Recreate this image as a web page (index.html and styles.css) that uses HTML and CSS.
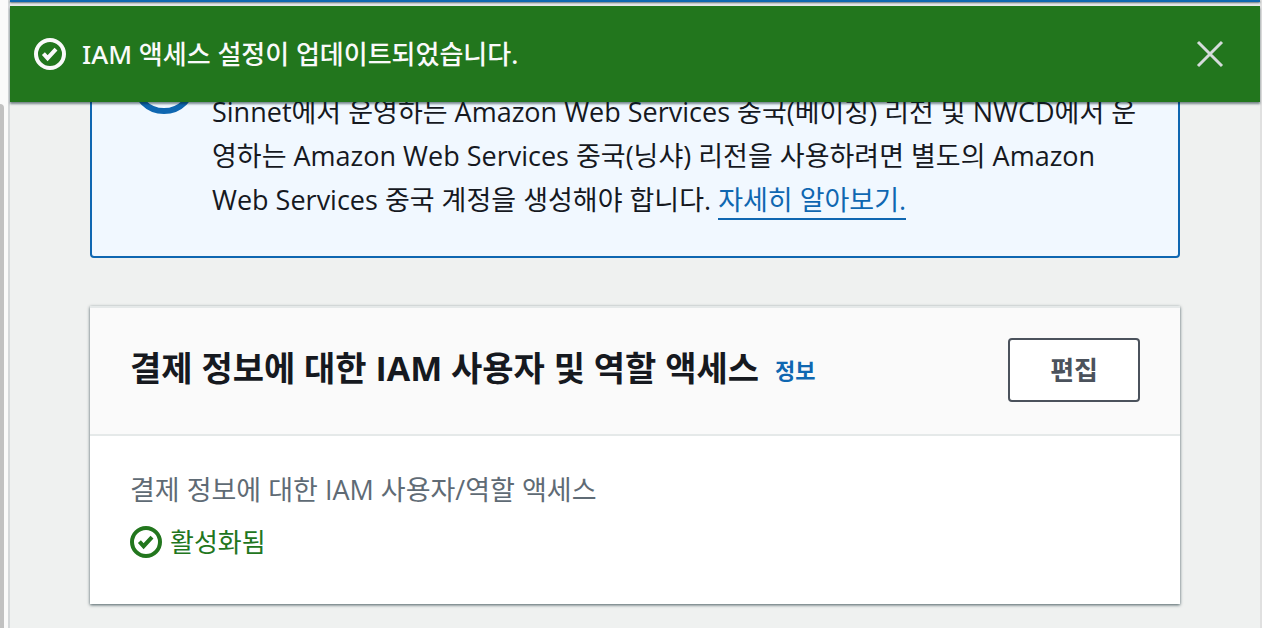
FILE: index.html
```
<!DOCTYPE html>
<html lang="ko">
<head>
    <meta charset="UTF-8">
    <meta name="viewport" content="width=device-width, initial-scale=1.0">
    <title>IAM 액세스 설정</title>
    <link rel="stylesheet" href="styles.css">
</head>
<body>
    <div class="layout">
        <div class="gutter">
            <div class="gutter-thumb"></div>
        </div>

        <div class="page">
            <!-- Notifications stay above the scrolled content -->
            <div class="flashbar">
                <div class="flash flash-info"></div>
                <div class="flash flash-success" role="status">
                    <svg class="icon" viewBox="0 0 16 16" aria-hidden="true">
                        <circle cx="8" cy="8" r="7"></circle>
                        <path d="M4.7 7.8l2.1 2.3 4.2-4.5"></path>
                    </svg>
                    <span class="flash-text">IAM 액세스 설정이 업데이트되었습니다.</span>
                    <button type="button" class="flash-close" aria-label="닫기">
                        <svg class="icon-close" viewBox="0 0 28 28" aria-hidden="true">
                            <path d="M2 2l24 24M26 2L2 26"></path>
                        </svg>
                    </button>
                </div>
            </div>

            <main class="content">
                <div class="alert">
                    <svg class="icon icon-large" viewBox="0 0 64 64" aria-hidden="true">
                        <circle cx="32" cy="32" r="29"></circle>
                    </svg>
                    <p class="alert-text">Sinnet에서 운영하는 Amazon Web Services 중국(베이징) 리전 및 NWCD에서 운영하는 Amazon Web Services 중국(닝샤) 리전을 사용하려면 별도의 Amazon Web Services 중국 계정을 생성해야 합니다. <a href="#">자세히 알아보기.</a></p>
                </div>

                <section class="panel">
                    <div class="panel-header">
                        <h2>결제 정보에 대한 IAM 사용자 및 역할 액세스</h2>
                        <a href="#" class="info-link">정보</a>
                        <button type="button" class="btn">편집</button>
                    </div>
                    <div class="panel-body">
                        <div class="label">결제 정보에 대한 IAM 사용자/역할 액세스</div>
                        <div class="status">
                            <svg class="icon" viewBox="0 0 16 16" aria-hidden="true">
                                <circle cx="8" cy="8" r="7"></circle>
                                <path d="M4.7 7.8l2.1 2.3 4.2-4.5"></path>
                            </svg>
                            <span>활성화됨</span>
                        </div>
                    </div>
                </section>
            </main>
        </div>
    </div>
</body>
</html>
```
FILE: styles.css
```
:root {
    --blue: #0f67b1;
    --green: #22761d;
    --background: #eff1f0;
    --text: #16191f;
    --muted: #5f6b75;
    --button: #4b525c;
    --border: #e5e9e9;
}

* {
    box-sizing: border-box;
}

body {
    margin: 0;
    overflow: hidden;
    background: var(--background);
    color: var(--text);
    font-family: "Open Sans", "Noto Sans CJK KR", sans-serif;
    font-size: 26px;
    line-height: 44px;
}

a {
    color: var(--blue);
    text-decoration: none;
}

.layout {
    display: flex;
    min-height: 100vh;
}

.gutter {
    flex: 0 0 10px;
    padding-top: 104px;
    background: #fafafa;
    border-right: 2px solid #d5d8da;
}

.gutter-thumb {
    width: 4px;
    height: 100%;
    background: #c1c1c1;
    border-top-right-radius: 4px;
}

.page {
    flex: 1;
    position: relative;
    border-right: 2px solid #e0e0e0;
}

.flashbar {
    position: absolute;
    top: 0;
    left: 0;
    right: 0;
    background: #e8eaea;
}

.flash-info {
    height: 2px;
    margin-bottom: 4px;
    background: var(--blue);
    box-shadow: 0 1px 2px rgba(0, 28, 36, 0.6);
}

.flash-success {
    display: flex;
    align-items: center;
    gap: 16px;
    height: 96px;
    padding: 0 36px 0 24px;
    background: var(--green);
    color: #fafafa;
    box-shadow: 0 2px 2px rgba(0, 28, 36, 0.5);
}

.flash-text {
    flex: 1;
    font-family: "Noto Sans", "Noto Sans CJK KR", sans-serif;
    font-weight: 500;
}

.flash-close {
    display: flex;
    padding: 0;
    background: none;
    border: none;
    color: #d5dbdb;
    cursor: pointer;
}

.icon {
    flex: none;
    width: 32px;
    height: 32px;
    fill: none;
    stroke: currentColor;
    stroke-width: 2;
}

.icon-large {
    width: 64px;
    height: 64px;
    color: var(--blue);
    stroke-width: 6;
}

.icon-close {
    width: 28px;
    height: 28px;
    fill: none;
    stroke: currentColor;
    stroke-width: 3;
}

.content {
    padding: 8px 80px 24px;
}

.alert {
    display: flex;
    gap: 16px;
    margin-bottom: 48px;
    padding: 40px 40px 34px;
    background: #f1f8ff;
    border: 2px solid var(--blue);
    border-radius: 4px;
}

.alert-text {
    margin: 0;
    padding-top: 40px;
    font-size: 27px;
}

.alert-text a {
    border-bottom: 2px solid var(--blue);
}

.panel {
    background: #fff;
    border-top: 2px solid var(--border);
    box-shadow: 0 1px 3px rgba(0, 28, 36, 0.7);
}

.panel-header {
    display: flex;
    align-items: flex-start;
    gap: 16px;
    padding: 30px 40px 32px;
    background: #fafafa;
    border-bottom: 2px solid var(--border);
}

h2 {
    margin: 0;
    font-size: 34px;
    line-height: 60px;
}

.info-link {
    font-size: 22px;
    font-weight: 700;
    line-height: 64px;
}

.btn {
    height: 64px;
    margin-left: auto;
    padding: 0 40px;
    background: #fff;
    border: 2px solid var(--button);
    border-radius: 4px;
    color: var(--button);
    font: inherit;
    font-weight: 700;
    cursor: pointer;
}

.panel-body {
    padding: 32px 40px 40px;
}

.label {
    color: var(--muted);
    font-size: 27px;
}

.status {
    display: flex;
    align-items: center;
    gap: 8px;
    padding-top: 8px;
    color: var(--green);
}
```
